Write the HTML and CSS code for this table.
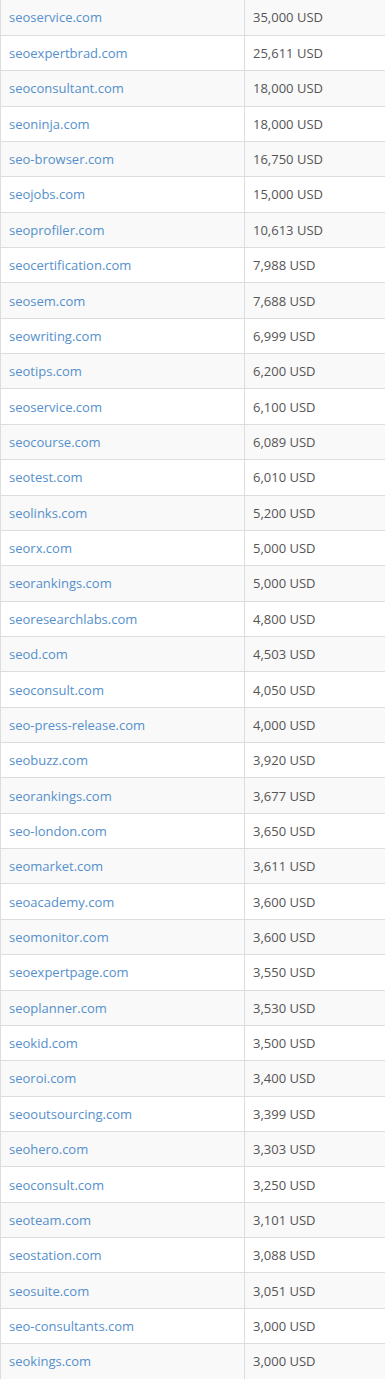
FILE: index.html
```html
<!DOCTYPE html>
<html>
<head>
<meta charset="utf-8">
<link rel="stylesheet" href="styles.css">
</head>
<body>
<table class="prices">
<tbody>
<tr><td class="dom"><a href="#">seoservice.com</a></td><td class="val">35,000 USD</td></tr>
<tr><td class="dom"><a href="#">seoexpertbrad.com</a></td><td class="val">25,611 USD</td></tr>
<tr><td class="dom"><a href="#">seoconsultant.com</a></td><td class="val">18,000 USD</td></tr>
<tr><td class="dom"><a href="#">seoninja.com</a></td><td class="val">18,000 USD</td></tr>
<tr><td class="dom"><a href="#">seo-browser.com</a></td><td class="val">16,750 USD</td></tr>
<tr><td class="dom"><a href="#">seojobs.com</a></td><td class="val">15,000 USD</td></tr>
<tr><td class="dom"><a href="#">seoprofiler.com</a></td><td class="val">10,613 USD</td></tr>
<tr><td class="dom"><a href="#">seocertification.com</a></td><td class="val">7,988 USD</td></tr>
<tr><td class="dom"><a href="#">seosem.com</a></td><td class="val">7,688 USD</td></tr>
<tr><td class="dom"><a href="#">seowriting.com</a></td><td class="val">6,999 USD</td></tr>
<tr><td class="dom"><a href="#">seotips.com</a></td><td class="val">6,200 USD</td></tr>
<tr><td class="dom"><a href="#">seoservice.com</a></td><td class="val">6,100 USD</td></tr>
<tr><td class="dom"><a href="#">seocourse.com</a></td><td class="val">6,089 USD</td></tr>
<tr><td class="dom"><a href="#">seotest.com</a></td><td class="val">6,010 USD</td></tr>
<tr><td class="dom"><a href="#">seolinks.com</a></td><td class="val">5,200 USD</td></tr>
<tr><td class="dom"><a href="#">seorx.com</a></td><td class="val">5,000 USD</td></tr>
<tr><td class="dom"><a href="#">seorankings.com</a></td><td class="val">5,000 USD</td></tr>
<tr><td class="dom"><a href="#">seoresearchlabs.com</a></td><td class="val">4,800 USD</td></tr>
<tr><td class="dom"><a href="#">seod.com</a></td><td class="val">4,503 USD</td></tr>
<tr><td class="dom"><a href="#">seoconsult.com</a></td><td class="val">4,050 USD</td></tr>
<tr><td class="dom"><a href="#">seo-press-release.com</a></td><td class="val">4,000 USD</td></tr>
<tr><td class="dom"><a href="#">seobuzz.com</a></td><td class="val">3,920 USD</td></tr>
<tr><td class="dom"><a href="#">seorankings.com</a></td><td class="val">3,677 USD</td></tr>
<tr><td class="dom"><a href="#">seo-london.com</a></td><td class="val">3,650 USD</td></tr>
<tr><td class="dom"><a href="#">seomarket.com</a></td><td class="val">3,611 USD</td></tr>
<tr><td class="dom"><a href="#">seoacademy.com</a></td><td class="val">3,600 USD</td></tr>
<tr><td class="dom"><a href="#">seomonitor.com</a></td><td class="val">3,600 USD</td></tr>
<tr><td class="dom"><a href="#">seoexpertpage.com</a></td><td class="val">3,550 USD</td></tr>
<tr><td class="dom"><a href="#">seoplanner.com</a></td><td class="val">3,530 USD</td></tr>
<tr><td class="dom"><a href="#">seokid.com</a></td><td class="val">3,500 USD</td></tr>
<tr><td class="dom"><a href="#">seoroi.com</a></td><td class="val">3,400 USD</td></tr>
<tr><td class="dom"><a href="#">seooutsourcing.com</a></td><td class="val">3,399 USD</td></tr>
<tr><td class="dom"><a href="#">seohero.com</a></td><td class="val">3,303 USD</td></tr>
<tr><td class="dom"><a href="#">seoconsult.com</a></td><td class="val">3,250 USD</td></tr>
<tr><td class="dom"><a href="#">seoteam.com</a></td><td class="val">3,101 USD</td></tr>
<tr><td class="dom"><a href="#">seostation.com</a></td><td class="val">3,088 USD</td></tr>
<tr><td class="dom"><a href="#">seosuite.com</a></td><td class="val">3,051 USD</td></tr>
<tr><td class="dom"><a href="#">seo-consultants.com</a></td><td class="val">3,000 USD</td></tr>
<tr><td class="dom"><a href="#">seokings.com</a></td><td class="val">3,000 USD</td></tr>
</tbody>
</table>
</body>
</html>
```

FILE: styles.css
```css
html, body {
  margin: 0;
  padding: 0;
  background: #ffffff;
}
body {
  font-family: "Open Sans", "Liberation Sans", sans-serif;
  font-size: 13px;
  color: #555555;
}
.prices {
  width: 385px;
  border-collapse: collapse;
  table-layout: fixed;
}
.prices tr {
  height: 35.36px;
}
.prices tr:nth-child(odd) {
  background: #f9f9f9;
}
.prices td {
  border: 1px solid #dddddd;
  border-right: none;
  padding: 0 8px;
  line-height: 20px;
  vertical-align: middle;
  white-space: nowrap;
}
.prices tr:first-child td {
  border-top: none;
}
.prices .dom {
  width: 227px;
}
.prices .val {
  color: #555555;
}
.prices a {
  color: #5590cc;
  text-decoration: none;
}
```
